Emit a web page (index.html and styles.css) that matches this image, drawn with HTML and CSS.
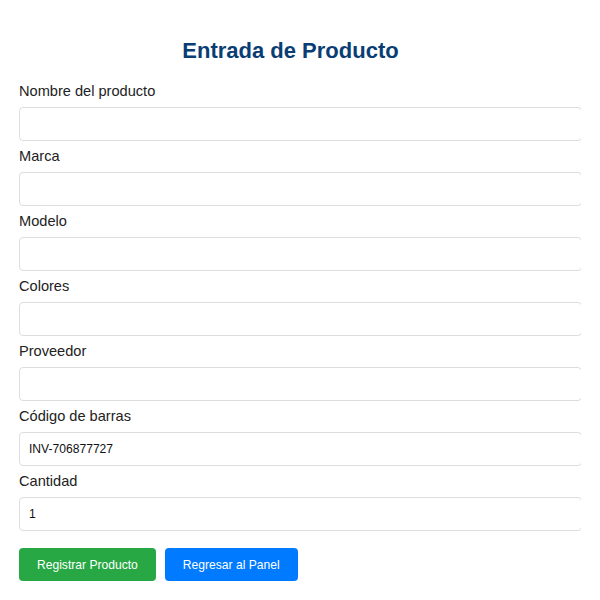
FILE: index.html
```html
<!DOCTYPE html>
<html lang="es">
<head>
    <meta charset="UTF-8">
    <meta name="viewport" content="width=device-width, initial-scale=1.0">
    <title>Entrada de Producto</title>
    <link rel="stylesheet" href="styles.css">
</head>
<body>
    <div class="container">
        <h2 class="title">Entrada de Producto</h2>

        <form class="product-form">
            <label for="nombre">Nombre del producto</label>
            <input type="text" id="nombre">

            <label for="marca">Marca</label>
            <input type="text" id="marca">

            <label for="modelo">Modelo</label>
            <input type="text" id="modelo">

            <label for="colores">Colores</label>
            <input type="text" id="colores">

            <label for="proveedor">Proveedor</label>
            <input type="text" id="proveedor">

            <label for="codigo">Código de barras</label>
            <input type="text" id="codigo" value="INV-706877727">

            <label for="cantidad">Cantidad</label>
            <input type="number" id="cantidad" value="1">

            <div class="actions">
                <button type="submit" class="btn btn-green">Registrar Producto</button>
                <button type="button" class="btn btn-blue">Regresar al Panel</button>
            </div>
        </form>
    </div>
</body>
</html>
```

FILE: styles.css
```css
/* Página base */
html, body {
    margin: 0;
    padding: 0;
    background: #fff;
    font-family: 'Liberation Sans', Arial, sans-serif;
    overflow: hidden;
}

.container {
    width: 543px;
    padding: 24px 19px;
    overflow: hidden;
}

.title {
    margin: 14px 0 18px;
    text-align: center;
    font-size: 22px;
    font-weight: bold;
    color: #0a3d73;
}

.product-form label {
    display: block;
    font-size: 14.6px;
    line-height: 18px;
    color: #222;
    margin: 6px 0 7px;
}

.product-form input {
    display: block;
    width: 100%;
    height: 14px;
    padding: 9px 9px;
    border: 1px solid #ddd;
    border-radius: 4px;
    font-family: inherit;
    font-size: 12.1px;
    color: #111;
    background: #fff;
    -moz-appearance: textfield;
}

.product-form input::-webkit-inner-spin-button,
.product-form input::-webkit-outer-spin-button {
    -webkit-appearance: none;
    margin: 0;
}

/* Botones */
.actions {
    display: flex;
    gap: 9px;
    margin-top: 17px;
}

.btn {
    border: none;
    border-radius: 4px;
    padding: 9px 18px;
    height: 33px;
    font-family: inherit;
    font-size: 12.1px;
    color: #fff;
    cursor: pointer;
}

.btn-green {
    background: #28a745;
}

.btn-blue {
    background: #007bff;
}
```
